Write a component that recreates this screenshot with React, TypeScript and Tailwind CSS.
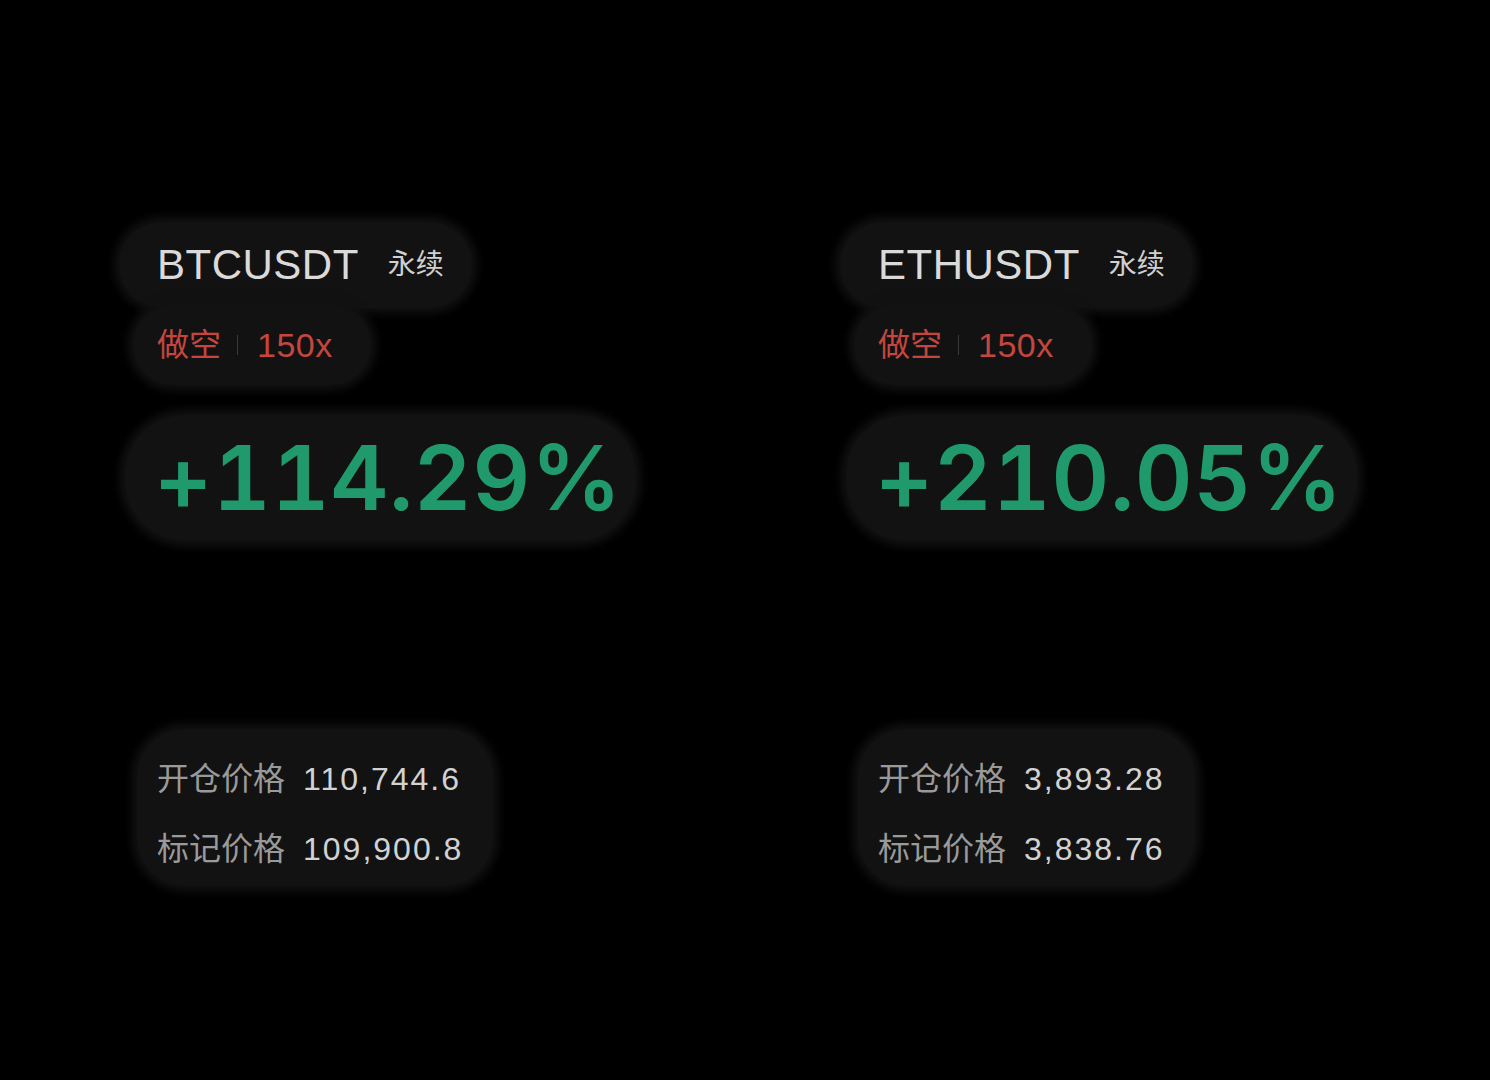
import React from 'react';

type Position = {
  symbol: string;
  pnl: string;
  entry: string;
  mark: string;
};

const positions: Position[] = [
  { symbol: 'BTCUSDT', pnl: '+114.29%', entry: '110,744.6', mark: '109,900.8' },
  { symbol: 'ETHUSDT', pnl: '+210.05%', entry: '3,893.28', mark: '3,838.76' },
];

const latin = "font-['Liberation_Sans','Noto_Sans_CJK_SC',sans-serif]";
const blob = 'bg-[#121212] shadow-[0_0_10px_5px_#121212]';

const PositionCard: React.FC<{ p: Position }> = ({ p }) => (
  <div className={`flex flex-col items-start ${latin}`}>
    {/* symbol + type */}
    <div className={`flex items-center rounded-full pl-[38px] pr-[28px] py-[17px] ${blob}`}>
      <span className="text-[42px] leading-[52px] text-[#dadada] tracking-[0.5px]">{p.symbol}</span>
      <span className="ml-[29px] text-[28px] leading-[52px] text-[#d0d0d0]">永续</span>
    </div>

    {/* side + leverage */}
    <div className={`-mt-[3px] ml-[14px] flex items-center rounded-full pl-[24px] pr-[38px] py-[20px] ${blob}`}>
      <span className="text-[32px] leading-[40px] text-[#c4463e]">做空</span>
      <span className="ml-[16px] mr-[19px] h-[20px] w-px bg-[#3a3a3a]" />
      <span className="text-[34px] leading-[40px] tracking-[0.5px] text-[#c4463e]">150x</span>
    </div>

    {/* pnl */}
    <div className={`mt-[30px] ml-[6px] rounded-[60px] pl-[29px] pr-[14px] py-[15px] ${blob}`}>
      <span className="block font-['Inter',sans-serif] text-[90px] leading-[96px] font-semibold tabular-nums tracking-[0.5px] text-[#209a6c]">
        {p.pnl}
      </span>
    </div>

    {/* prices */}
    <div className={`mt-[188px] ml-[18px] flex flex-col rounded-[48px] pl-[20px] pr-[30px] pt-[15px] pb-[2px] ${blob}`}>
      <div className="flex items-center h-[70px]">
        <span className="text-[32px] text-[#9a9a9a]">开仓价格</span>
        <span className="ml-[18px] text-[32px] tracking-[2px] text-[#d2d2d2]">{p.entry}</span>
      </div>
      <div className="flex items-center h-[70px]">
        <span className="text-[32px] text-[#9a9a9a]">标记价格</span>
        <span className="ml-[18px] text-[32px] tracking-[2px] text-[#d2d2d2]">{p.mark}</span>
      </div>
    </div>
  </div>
);

export default function App() {
  return (
    <div className="min-h-screen w-full bg-black">
      <div className="grid grid-cols-[721px_721px] pl-[119px] pt-[222px]">
        {positions.map((p) => (
          <PositionCard key={p.symbol} p={p} />
        ))}
      </div>
    </div>
  );
}
